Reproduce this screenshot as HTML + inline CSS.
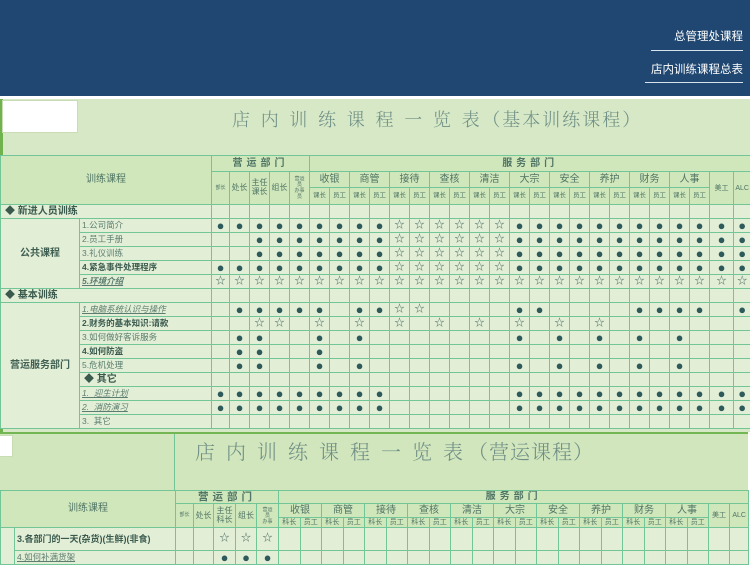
<!DOCTYPE html>
<html><head><meta charset="utf-8"><style>
*{margin:0;padding:0;box-sizing:border-box}
body{width:750px;height:563px;overflow:hidden;background:#fff;position:relative;font-family:"Liberation Sans","Noto Sans CJK SC",sans-serif}
#top{position:absolute;left:0;top:0;width:750px;height:96px;background:#1f4771}
.nav{position:absolute;right:7px;color:#fff;font-size:11.5px;font-family:"Liberation Sans","Noto Sans CJK SC",sans-serif}
.ln{position:absolute;height:1px;background:#d8e2ec}
#b1{position:absolute;left:0;top:99px;width:750px;height:333px;background:#d6e8c6;border-left:3px solid #6fb24e}
#b2{position:absolute;left:0;top:432px;width:748px;height:131px;background:#d2e6bd;border-top:2px solid #74b653}
table{border-collapse:collapse;table-layout:fixed;position:absolute}
td{border:1px solid #72c597;text-align:center;vertical-align:middle;color:#4f7565;font-size:9px;line-height:1;overflow:hidden;white-space:nowrap;padding:0}
.h{background:#d0e6bb}
.dt td{background:#e2eed6}
.dt td.l{text-align:left;padding-left:2px;font-size:8.5px;color:#5b7d6f}
.D{color:#2f5a5c;font-size:13px}
.S{color:#4a6a60;font-size:10px}
.sec{background:#e2eed6;text-align:left!important;font-weight:bold;font-size:10px!important;color:#3a5a4e!important;padding-left:4px!important}
.title{position:absolute;font-family:"Noto Serif CJK SC","Liberation Serif",serif;color:#6f8f86;white-space:nowrap;font-weight:300}
.tiny{font-size:5px}
</style></head><body>
<div id="top">
<div class="nav" style="top:28px">总管理处课程</div>
<div class="ln" style="left:651px;top:50px;width:92px"></div>
<div class="nav" style="top:61px">店内训练课程总表</div>
<div class="ln" style="left:645px;top:82px;width:98px"></div>
</div>

<div id="b1">
<div style="position:absolute;left:-1px;top:1px;width:76px;height:33px;background:#fff;border:1px solid #c9ddb5"></div>
<div class="title" style="left:229px;top:7px;font-size:18px;letter-spacing:10.7px">店内训练课程一览表<span style="letter-spacing:2px;margin-left:-8px">（基本训练课程）</span></div>
<table style="left:-3px;top:56px;width:750px">
<colgroup><col style="width:79px"><col style="width:132px"><col style="width:18px"><col style="width:20px"><col style="width:20px"><col style="width:20px"><col style="width:20px">
<col span="20" style="width:20px"><col style="width:24px"><col style="width:17px"></colgroup>
<tr class="h" style="height:16px"><td colspan="2" rowspan="3" style="font-size:10px">训练课程</td><td colspan="5" style="font-weight:bold;letter-spacing:4px;font-size:10px">营运部门</td><td colspan="22" style="font-weight:bold;letter-spacing:4px;font-size:10px">服务部门</td></tr>
<tr class="h" style="height:16px"><td rowspan="2" class="tiny">部长</td><td rowspan="2" style="font-size:8px">处长</td><td rowspan="2" style="font-size:8px;line-height:1.1">主任<br>课长</td><td rowspan="2" style="font-size:8px">组长</td><td rowspan="2" class="tiny" style="line-height:1.2">营运<br>员<br>办事<br>员</td>
<td colspan="2" style="font-size:10px">收银</td><td colspan="2" style="font-size:10px">商管</td><td colspan="2" style="font-size:10px">接待</td><td colspan="2" style="font-size:10px">查核</td><td colspan="2" style="font-size:10px">清洁</td><td colspan="2" style="font-size:10px">大宗</td><td colspan="2" style="font-size:10px">安全</td><td colspan="2" style="font-size:10px">养护</td><td colspan="2" style="font-size:10px">财务</td><td colspan="2" style="font-size:10px">人事</td><td rowspan="2" style="font-size:7px">美工</td><td rowspan="2" style="font-size:7px">ALC</td></tr>
<tr class="h" style="height:17px"><td style="font-size:6.5px">课长</td><td style="font-size:6.5px">员工</td><td style="font-size:6.5px">课长</td><td style="font-size:6.5px">员工</td><td style="font-size:6.5px">课长</td><td style="font-size:6.5px">员工</td><td style="font-size:6.5px">课长</td><td style="font-size:6.5px">员工</td><td style="font-size:6.5px">课长</td><td style="font-size:6.5px">员工</td><td style="font-size:6.5px">课长</td><td style="font-size:6.5px">员工</td><td style="font-size:6.5px">课长</td><td style="font-size:6.5px">员工</td><td style="font-size:6.5px">课长</td><td style="font-size:6.5px">员工</td><td style="font-size:6.5px">课长</td><td style="font-size:6.5px">员工</td><td style="font-size:6.5px">课长</td><td style="font-size:6.5px">员工</td></tr>
<tbody class="dt">
<tr style="height:14px"><td colspan="2" class="sec">◆ 新进人员训练</td><td></td><td></td><td></td><td></td><td></td><td></td><td></td><td></td><td></td><td></td><td></td><td></td><td></td><td></td><td></td><td></td><td></td><td></td><td></td><td></td><td></td><td></td><td></td><td></td><td></td><td></td><td></td></tr>
<tr style="height:14px"><td rowspan="5" style="font-size:10px;font-weight:bold;color:#3f5f52">公共课程</td><td class="l">1.公司简介</td><td class="D">●</td><td class="D">●</td><td class="D">●</td><td class="D">●</td><td class="D">●</td><td class="D">●</td><td class="D">●</td><td class="D">●</td><td class="D">●</td><td class="S">☆</td><td class="S">☆</td><td class="S">☆</td><td class="S">☆</td><td class="S">☆</td><td class="S">☆</td><td class="D">●</td><td class="D">●</td><td class="D">●</td><td class="D">●</td><td class="D">●</td><td class="D">●</td><td class="D">●</td><td class="D">●</td><td class="D">●</td><td class="D">●</td><td class="D">●</td><td class="D">●</td></tr>
<tr style="height:14px"><td class="l">2.员工手册</td><td></td><td></td><td class="D">●</td><td class="D">●</td><td class="D">●</td><td class="D">●</td><td class="D">●</td><td class="D">●</td><td class="D">●</td><td class="S">☆</td><td class="S">☆</td><td class="S">☆</td><td class="S">☆</td><td class="S">☆</td><td class="S">☆</td><td class="D">●</td><td class="D">●</td><td class="D">●</td><td class="D">●</td><td class="D">●</td><td class="D">●</td><td class="D">●</td><td class="D">●</td><td class="D">●</td><td class="D">●</td><td class="D">●</td><td class="D">●</td></tr>
<tr style="height:14px"><td class="l">3.礼仪训练</td><td></td><td></td><td class="D">●</td><td class="D">●</td><td class="D">●</td><td class="D">●</td><td class="D">●</td><td class="D">●</td><td class="D">●</td><td class="S">☆</td><td class="S">☆</td><td class="S">☆</td><td class="S">☆</td><td class="S">☆</td><td class="S">☆</td><td class="D">●</td><td class="D">●</td><td class="D">●</td><td class="D">●</td><td class="D">●</td><td class="D">●</td><td class="D">●</td><td class="D">●</td><td class="D">●</td><td class="D">●</td><td class="D">●</td><td class="D">●</td></tr>
<tr style="height:14px"><td class="l" style="font-weight:bold;color:#3a5a4e">4.紧急事件处理程序</td><td class="D">●</td><td class="D">●</td><td class="D">●</td><td class="D">●</td><td class="D">●</td><td class="D">●</td><td class="D">●</td><td class="D">●</td><td class="D">●</td><td class="S">☆</td><td class="S">☆</td><td class="S">☆</td><td class="S">☆</td><td class="S">☆</td><td class="S">☆</td><td class="D">●</td><td class="D">●</td><td class="D">●</td><td class="D">●</td><td class="D">●</td><td class="D">●</td><td class="D">●</td><td class="D">●</td><td class="D">●</td><td class="D">●</td><td class="D">●</td><td class="D">●</td></tr>
<tr style="height:14px"><td class="l" style="font-weight:bold;font-style:italic;text-decoration:underline">5.环境介绍</td><td class="S">☆</td><td class="S">☆</td><td class="S">☆</td><td class="S">☆</td><td class="S">☆</td><td class="S">☆</td><td class="S">☆</td><td class="S">☆</td><td class="S">☆</td><td class="S">☆</td><td class="S">☆</td><td class="S">☆</td><td class="S">☆</td><td class="S">☆</td><td class="S">☆</td><td class="S">☆</td><td class="S">☆</td><td class="S">☆</td><td class="S">☆</td><td class="S">☆</td><td class="S">☆</td><td class="S">☆</td><td class="S">☆</td><td class="S">☆</td><td class="S">☆</td><td class="S">☆</td><td class="S">☆</td></tr>
<tr style="height:14px"><td colspan="2" class="sec">◆ 基本训练</td><td></td><td></td><td></td><td></td><td></td><td></td><td></td><td></td><td></td><td></td><td></td><td></td><td></td><td></td><td></td><td></td><td></td><td></td><td></td><td></td><td></td><td></td><td></td><td></td><td></td><td></td><td></td></tr>
<tr style="height:14px"><td rowspan="10" style="font-size:10px;font-weight:bold;color:#3f5f52">营运服务部门</td><td class="l" style="font-style:italic;text-decoration:underline">1.电脑系统认识与操作</td><td></td><td class="D">●</td><td class="D">●</td><td class="D">●</td><td class="D">●</td><td class="D">●</td><td></td><td class="D">●</td><td class="D">●</td><td class="S">☆</td><td class="S">☆</td><td></td><td></td><td></td><td></td><td class="D">●</td><td class="D">●</td><td></td><td></td><td></td><td></td><td class="D">●</td><td class="D">●</td><td class="D">●</td><td class="D">●</td><td></td><td class="D">●</td></tr>
<tr style="height:14px"><td class="l" style="font-weight:bold;color:#3a5a4e">2.财务的基本知识:请款</td><td></td><td></td><td class="S">☆</td><td class="S">☆</td><td></td><td class="S">☆</td><td></td><td class="S">☆</td><td></td><td class="S">☆</td><td></td><td class="S">☆</td><td></td><td class="S">☆</td><td></td><td class="S">☆</td><td></td><td class="S">☆</td><td></td><td class="S">☆</td><td></td><td></td><td></td><td></td><td></td><td></td><td></td></tr>
<tr style="height:14px"><td class="l">3.如何做好客诉服务</td><td></td><td class="D">●</td><td class="D">●</td><td></td><td></td><td class="D">●</td><td></td><td class="D">●</td><td></td><td></td><td></td><td></td><td></td><td></td><td></td><td class="D">●</td><td></td><td class="D">●</td><td></td><td class="D">●</td><td></td><td class="D">●</td><td></td><td class="D">●</td><td></td><td></td><td></td></tr>
<tr style="height:14px"><td class="l" style="font-weight:bold;color:#3a5a4e">4.如何防盗</td><td></td><td class="D">●</td><td class="D">●</td><td></td><td></td><td class="D">●</td><td></td><td></td><td></td><td></td><td></td><td></td><td></td><td></td><td></td><td></td><td></td><td></td><td></td><td></td><td></td><td></td><td></td><td></td><td></td><td></td><td></td></tr>
<tr style="height:14px"><td class="l">5.危机处理</td><td></td><td class="D">●</td><td class="D">●</td><td></td><td></td><td class="D">●</td><td></td><td class="D">●</td><td></td><td></td><td></td><td></td><td></td><td></td><td></td><td class="D">●</td><td></td><td class="D">●</td><td></td><td class="D">●</td><td></td><td class="D">●</td><td></td><td class="D">●</td><td></td><td></td><td></td></tr>
<tr style="height:14px"><td class="sec">◆ 其它</td><td></td><td></td><td></td><td></td><td></td><td></td><td></td><td></td><td></td><td></td><td></td><td></td><td></td><td></td><td></td><td></td><td></td><td></td><td></td><td></td><td></td><td></td><td></td><td></td><td></td><td></td><td></td></tr>
<tr style="height:14px"><td class="l" style="font-style:italic;text-decoration:underline">1.&nbsp; 迎生计划</td><td class="D">●</td><td class="D">●</td><td class="D">●</td><td class="D">●</td><td class="D">●</td><td class="D">●</td><td class="D">●</td><td class="D">●</td><td class="D">●</td><td></td><td></td><td></td><td></td><td></td><td></td><td class="D">●</td><td class="D">●</td><td class="D">●</td><td class="D">●</td><td class="D">●</td><td class="D">●</td><td class="D">●</td><td class="D">●</td><td class="D">●</td><td class="D">●</td><td class="D">●</td><td class="D">●</td></tr>
<tr style="height:14px"><td class="l" style="font-style:italic;text-decoration:underline">2.&nbsp; 消防演习</td><td class="D">●</td><td class="D">●</td><td class="D">●</td><td class="D">●</td><td class="D">●</td><td class="D">●</td><td class="D">●</td><td class="D">●</td><td class="D">●</td><td></td><td></td><td></td><td></td><td></td><td></td><td class="D">●</td><td class="D">●</td><td class="D">●</td><td class="D">●</td><td class="D">●</td><td class="D">●</td><td class="D">●</td><td class="D">●</td><td class="D">●</td><td class="D">●</td><td class="D">●</td><td class="D">●</td></tr>
<tr style="height:14px"><td class="l">3.&nbsp; 其它</td><td></td><td></td><td></td><td></td><td></td><td></td><td></td><td></td><td></td><td></td><td></td><td></td><td></td><td></td><td></td><td></td><td></td><td></td><td></td><td></td><td></td><td></td><td></td><td></td><td></td><td></td><td></td></tr>
</tbody></table>
</div>

<div id="b2">
<div style="position:absolute;left:0;top:1px;width:13px;height:22px;background:#fff;border:1px solid #c9ddb5;border-left:none"></div>
<div style="position:absolute;left:174px;top:0;width:1px;height:58px;background:#72c597"></div>
<div class="title" style="left:195px;top:2px;font-size:20px;letter-spacing:11px">店内训练课程一览表<span style="letter-spacing:1px;margin-left:-6px">（营运课程）</span></div>
<table style="left:0;top:56px;width:748px">
<colgroup><col style="width:14px"><col style="width:161px"><col style="width:18px"><col style="width:20px"><col style="width:22px"><col style="width:21px"><col style="width:22px">
<col span="20" style="width:21.5px"><col style="width:21px"><col style="width:19px"></colgroup>
<tr class="h" style="height:13px"><td colspan="2" rowspan="3" style="font-size:10px;background:#d0e6bb">训练课程</td><td colspan="5" style="font-weight:bold;letter-spacing:4px;font-size:10.5px">营运部门</td><td colspan="22" style="font-weight:bold;letter-spacing:4px;font-size:10px">服务部门</td></tr>
<tr class="h" style="height:14px"><td rowspan="2" class="tiny">部长</td><td rowspan="2" style="font-size:8px">处长</td><td rowspan="2" style="font-size:8px;line-height:1.1">主任<br>科长</td><td rowspan="2" style="font-size:8px">组长</td><td rowspan="2" class="tiny" style="line-height:1.2">营运<br>员<br>办事</td>
<td colspan="2" style="font-size:10px">收银</td><td colspan="2" style="font-size:10px">商管</td><td colspan="2" style="font-size:10px">接待</td><td colspan="2" style="font-size:10px">查核</td><td colspan="2" style="font-size:10px">清洁</td><td colspan="2" style="font-size:10px">大宗</td><td colspan="2" style="font-size:10px">安全</td><td colspan="2" style="font-size:10px">养护</td><td colspan="2" style="font-size:10px">财务</td><td colspan="2" style="font-size:10px">人事</td><td rowspan="2" style="font-size:7px">美工</td><td rowspan="2" style="font-size:7px">ALC</td></tr>
<tr class="h" style="height:10px"><td style="font-size:7px">科长</td><td style="font-size:7px">员工</td><td style="font-size:7px">科长</td><td style="font-size:7px">员工</td><td style="font-size:7px">科长</td><td style="font-size:7px">员工</td><td style="font-size:7px">科长</td><td style="font-size:7px">员工</td><td style="font-size:7px">科长</td><td style="font-size:7px">员工</td><td style="font-size:7px">科长</td><td style="font-size:7px">员工</td><td style="font-size:7px">科长</td><td style="font-size:7px">员工</td><td style="font-size:7px">科长</td><td style="font-size:7px">员工</td><td style="font-size:7px">科长</td><td style="font-size:7px">员工</td><td style="font-size:7px">科长</td><td style="font-size:7px">员工</td></tr>
<tbody class="dt">
<tr style="height:23px"><td rowspan="2"></td><td class="l" style="font-weight:bold;white-space:normal;font-size:9px;line-height:1.15;color:#3a5a4e">3.各部门的一天(杂货)(生鲜)(非食)</td><td></td><td></td><td class="S">☆</td><td class="S">☆</td><td class="S">☆</td><td></td><td></td><td></td><td></td><td></td><td></td><td></td><td></td><td></td><td></td><td></td><td></td><td></td><td></td><td></td><td></td><td></td><td></td><td></td><td></td><td></td><td></td></tr>
<tr style="height:14px"><td class="l" style="text-decoration:underline">4.如何补满货架</td><td></td><td></td><td class="D">●</td><td class="D">●</td><td class="D">●</td><td></td><td></td><td></td><td></td><td></td><td></td><td></td><td></td><td></td><td></td><td></td><td></td><td></td><td></td><td></td><td></td><td></td><td></td><td></td><td></td><td></td><td></td></tr>
</tbody></table>
</div>
</body></html>
